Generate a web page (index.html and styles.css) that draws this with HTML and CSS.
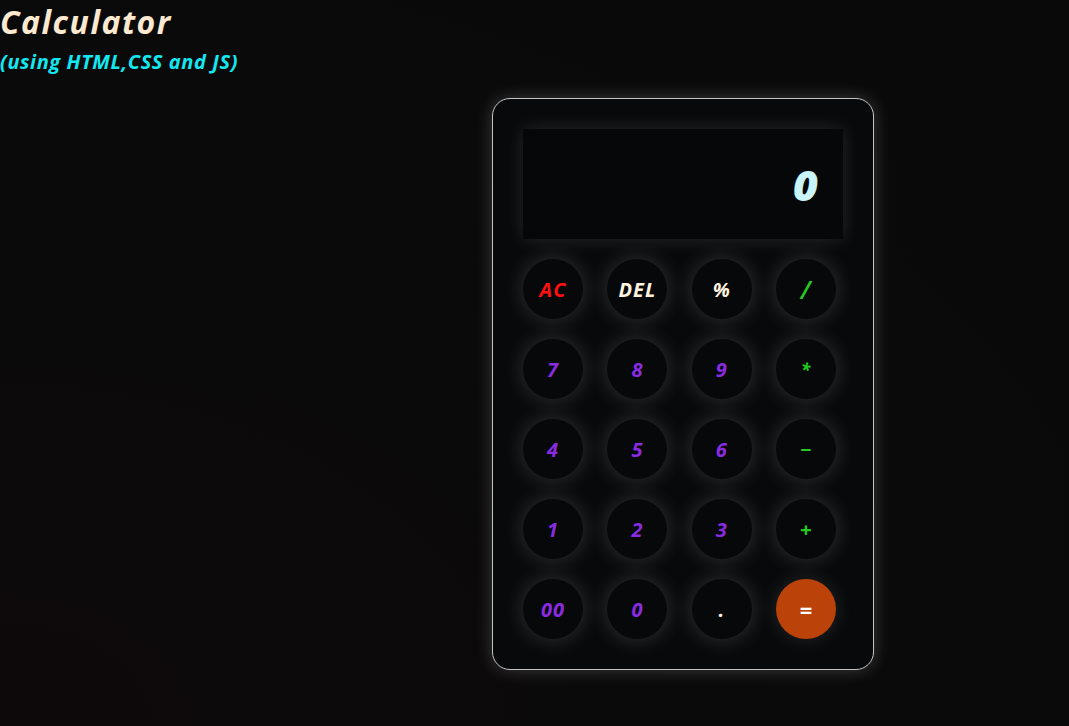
FILE: index.html
```html
<!DOCTYPE html>
<html lang="en">
<head>
<meta charset="UTF-8">
<title>Calculator</title>
<link rel="stylesheet" href="styles.css">
</head>
<body>
<header class="header">
  <h1 class="title">Calculator</h1>
  <p class="subtitle">(using HTML,CSS and JS)</p>
</header>
<main class="stage">
  <div class="calc">
    <div class="display"><span class="display-value">0</span></div>
    <div class="keys">
      <button class="key key-clear">AC</button>
      <button class="key key-light">DEL</button>
      <button class="key key-light">%</button>
      <button class="key key-op key-slash">/</button>
      <button class="key key-num">7</button>
      <button class="key key-num">8</button>
      <button class="key key-num">9</button>
      <button class="key key-op key-small">*</button>
      <button class="key key-num">4</button>
      <button class="key key-num">5</button>
      <button class="key key-num">6</button>
      <button class="key key-op">&minus;</button>
      <button class="key key-num">1</button>
      <button class="key key-num">2</button>
      <button class="key key-num">3</button>
      <button class="key key-op">+</button>
      <button class="key key-num">00</button>
      <button class="key key-num">0</button>
      <button class="key key-light">.</button>
      <button class="key key-equal">=</button>
    </div>
  </div>
</main>
</body>
</html>
```
FILE: styles.css
```css
* { box-sizing: border-box; }
html, body { height: 100%; }
body {
  margin: 0;
  background: radial-gradient(ellipse at 0% 100%, #0d090a 0%, #0a0a0b 55%, #09090a 100%);
  background-color: #0a0a0b;
  font-family: "Open Sans", "Liberation Sans", sans-serif;
  font-style: italic;
  font-weight: 700;
  overflow: hidden;
}
.title {
  margin: 0;
  font-size: 32px;
  line-height: 44px;
  color: #fde9cf;
  font-weight: 700;
  letter-spacing: 1.5px;
}
.subtitle {
  margin: 0;
  font-size: 20px;
  line-height: 36px;
  color: #13e8f0;
  font-weight: 700;
  letter-spacing: 0.6px;
}
.stage {
  padding-left: 492px;
  padding-top: 18px;
}
.calc {
  width: 382px;
  padding: 30px;
  border: 1px solid #c4c4c4;
  border-radius: 18px;
  background: #08090a;
  box-shadow: 0 0 18px rgba(255, 255, 255, 0.2);
}
.display {
  height: 110px;
  background: #060708;
  display: flex;
  align-items: center;
  justify-content: flex-end;
  padding-right: 25px;
  box-shadow: 0 0 18px rgba(255, 255, 255, 0.13);
}
.display-value {
  color: #c9f4f8;
  font-size: 43px;
  font-weight: 800;
}
.keys {
  margin-top: 20px;
  display: grid;
  grid-template-columns: repeat(4, 60px);
  column-gap: 24.4px;
  row-gap: 20px;
}
.key {
  width: 60px;
  height: 60px;
  border-radius: 50%;
  border: none;
  background: #070809;
  font-family: inherit;
  font-style: italic;
  font-weight: 700;
  font-size: 20px;
  letter-spacing: 1px;
  padding: 0;
  box-shadow: 0 0 22px rgba(255, 255, 255, 0.18);
  cursor: pointer;
}
.key-clear { color: #ff1010; }
.key-light { color: #fff3e0; }
.key-op { color: #22cc22; }
.key-slash { font-size: 25px; font-weight: 600; }
.key-small { font-size: 17px; }
.key-num { color: #8a2be2; }
.key-equal { background: #bb4208; color: #ffffff; font-size: 22px; box-shadow: 0 0 20px rgba(255, 255, 255, 0.12); }
```
